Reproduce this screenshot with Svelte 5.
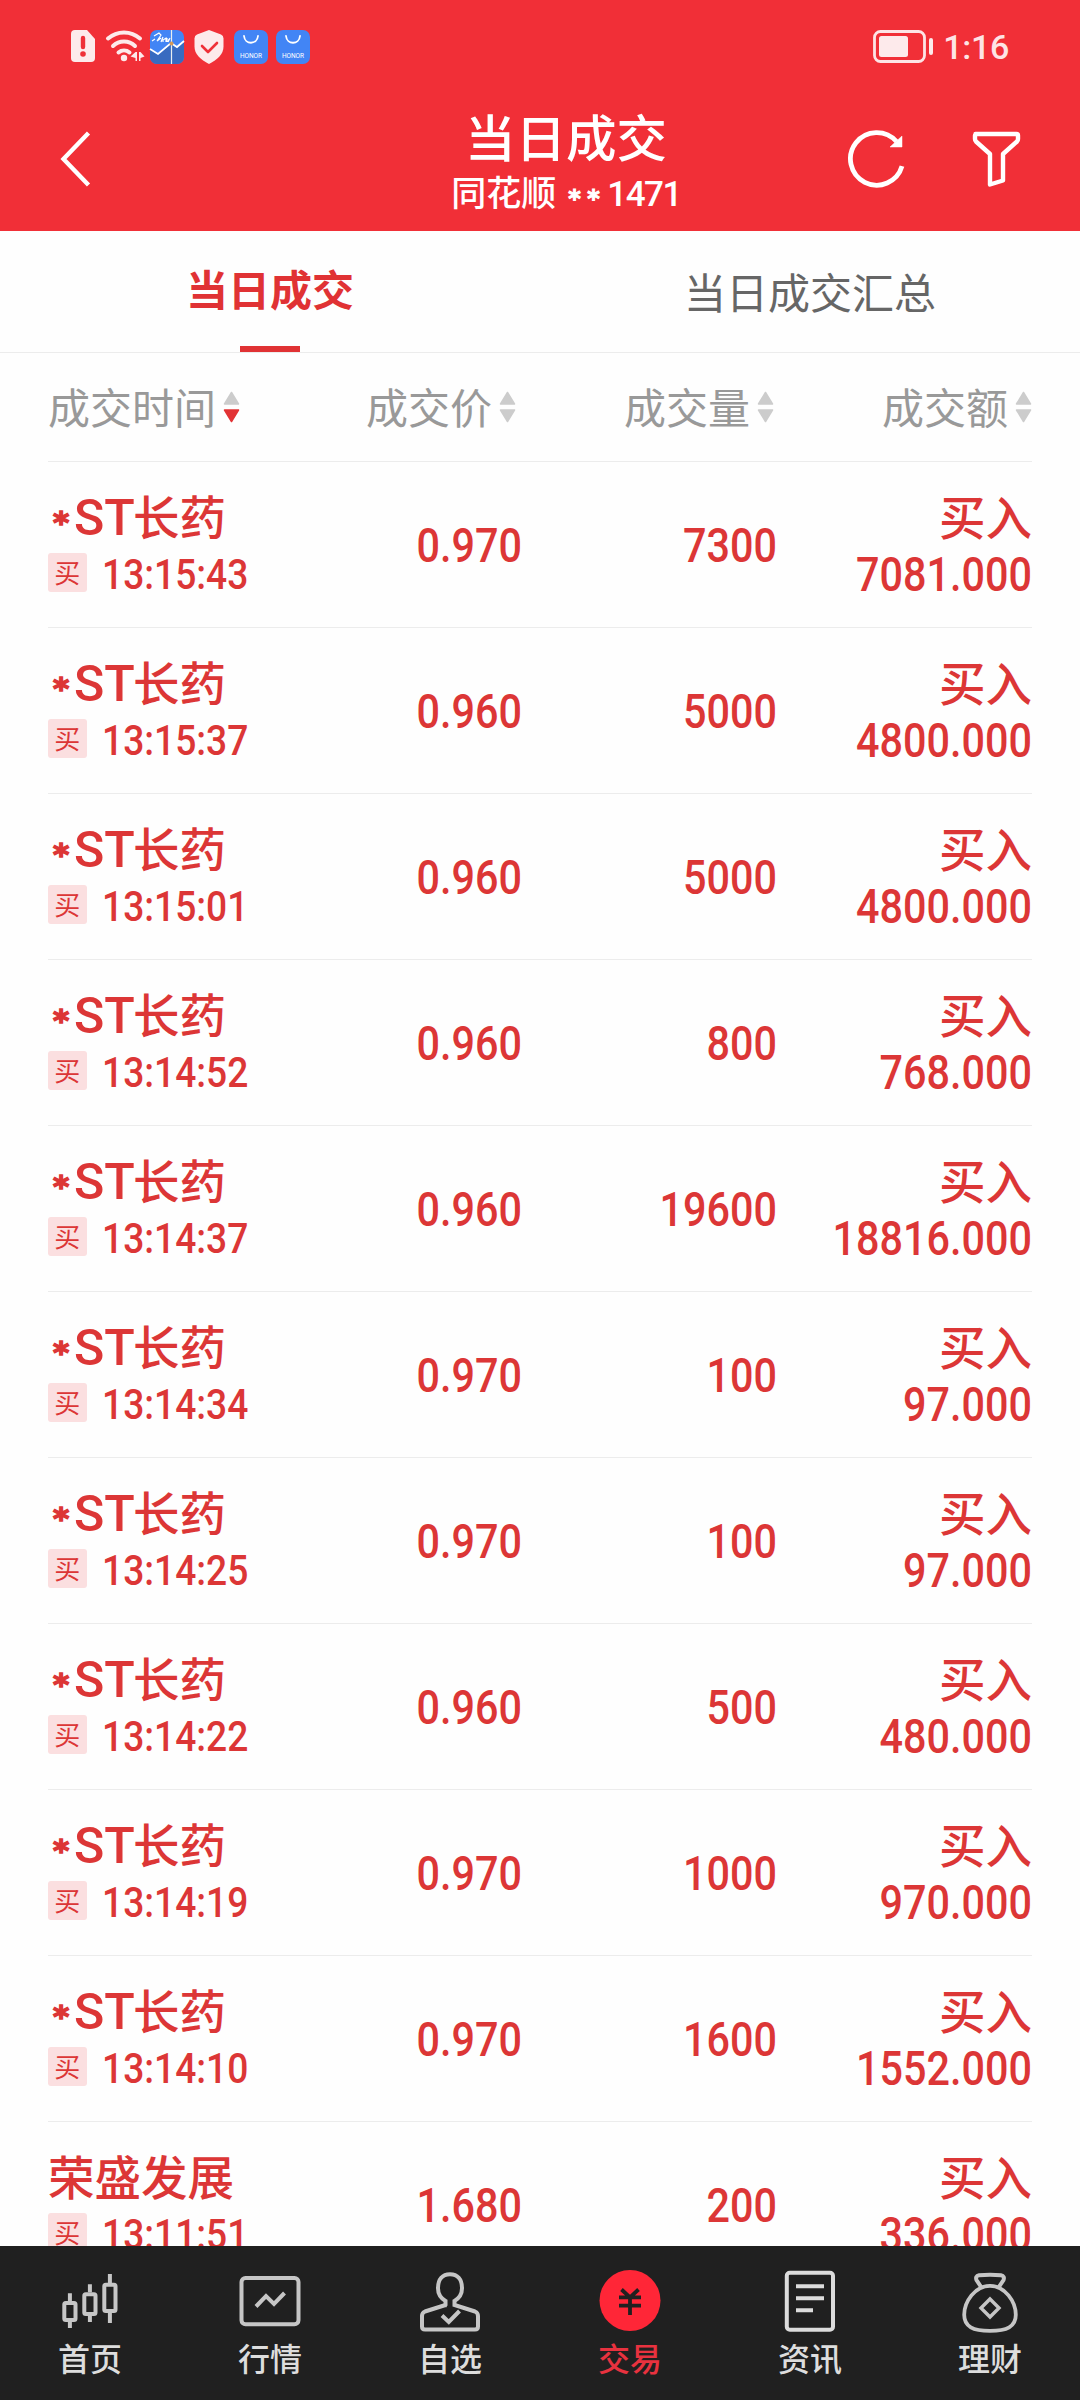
<script>
    let activeTab = "today";
    let activeNav = "交易";

    const tabs = [
        { id: "today", label: "当日成交" },
        { id: "summary", label: "当日成交汇总" },
    ];

    const columns = [
        { label: "成交时间", sorted: true },
        { label: "成交价" },
        { label: "成交量" },
        { label: "成交额" },
    ];

    const navItems = ["首页", "行情", "自选", "交易", "资讯", "理财"];

    const deals = [
        { st: true, name: "长药", time: "13:15:43", price: "0.970", count: "7300", amount: "7081.000" },
        { st: true, name: "长药", time: "13:15:37", price: "0.960", count: "5000", amount: "4800.000" },
        { st: true, name: "长药", time: "13:15:01", price: "0.960", count: "5000", amount: "4800.000" },
        { st: true, name: "长药", time: "13:14:52", price: "0.960", count: "800", amount: "768.000" },
        { st: true, name: "长药", time: "13:14:37", price: "0.960", count: "19600", amount: "18816.000" },
        { st: true, name: "长药", time: "13:14:34", price: "0.970", count: "100", amount: "97.000" },
        { st: true, name: "长药", time: "13:14:25", price: "0.970", count: "100", amount: "97.000" },
        { st: true, name: "长药", time: "13:14:22", price: "0.960", count: "500", amount: "480.000" },
        { st: true, name: "长药", time: "13:14:19", price: "0.970", count: "1000", amount: "970.000" },
        { st: true, name: "长药", time: "13:14:10", price: "0.970", count: "1600", amount: "1552.000" },
        { st: false, name: "荣盛发展", time: "13:11:51", price: "1.680", count: "200", amount: "336.000" },
    ];
</script>

<div class="screen">
    <header>
        <div class="statusbar">
            <svg class="status-icons" width="250" height="40" viewBox="0 0 250 40">
                <!-- sim alert -->
                <path d="M5 4h12l8 9v19a4 4 0 0 1-4 4H5a4 4 0 0 1-4-4V8a4 4 0 0 1 4-4z" fill="#fdeaeb" />
                <path d="M13 12v9" stroke="#ef3038" stroke-width="4.4" stroke-linecap="round" />
                <circle cx="13" cy="28" r="2.8" fill="#ef3038" />
                <!-- wifi -->
                <g fill="none" stroke="#fdeaeb" stroke-width="4" stroke-linecap="round">
                    <path d="M38 12.500a24 24 0 0 1 32 0" />
                    <path d="M43 20a16 16 0 0 1 22 0" />
                    <path d="M48.500 26.500a8.500 8.500 0 0 1 11 0" />
                </g>
                <circle cx="54" cy="32" r="3.200" fill="#fdeaeb" />
                <path d="M67 26v9h-1.500v-3l-5-1.500 5-4.500zM69 26v9h1.500v-3l4-1.500-4-4.500z" fill="#fdeaeb" />
                <!-- stock widget -->
                <rect x="80" y="4" width="34" height="34" rx="7" fill="#4285f5" />
                <path d="M80 23l8 6 13-11 6 4 7-6v15a7 7 0 0 1-7 7H87a7 7 0 0 1-7-7z" fill="#386bc0" />
                <path d="M80 23l8 5 13-11 6 4 7-6" fill="none" stroke="#fff" stroke-width="1.800" />
                <path d="M101.500 4v34" stroke="#e9eef0" stroke-width="1.200" />
                <circle cx="101.500" cy="17.500" r="2" fill="#d29a5c" />
                <path d="M82 15l3-2m-1-3l5-3 2 2-4 6 4-3m0 4l2-5m0 5v-2l3-2v4m1 0v-4m2 1l-1 3 2-4" fill="none" stroke="#fff" stroke-width="1.200" />
                <!-- shield -->
                <path d="M139 4l12 4.500q2.500 1 2.500 4v8c0 8-6 13-14.500 17.500-8.500-4.500-14.500-9.500-14.500-17.500v-8q0-3 2.500-4z" fill="#fdeaeb" />
                <path d="M132 20l6 6 9-9" fill="none" stroke="#ef3038" stroke-width="2.600" stroke-linecap="round" stroke-linejoin="round" />
                <!-- app market, twice -->
                {#each [164, 206] as x}
                    <rect {x} y="4" width="34" height="34" rx="7" fill="#4285f5" />
                    <path d="M{x + 10} 10c1 9 13 9 14 0" fill="none" stroke="#fff" stroke-width="1.800" stroke-linecap="round" />
                    <text x={x + 17} y="32" class="honor">HONOR</text>
                {/each}
            </svg>
            <div class="clock">
                <svg width="62" height="34" viewBox="0 0 62 34">
                    <rect x="1.500" y="1.500" width="50" height="30" rx="6" fill="none" stroke="#fde4e5" stroke-width="2.800" />
                    <rect x="6" y="6" width="29" height="21" rx="2.500" fill="#fdeaeb" />
                    <rect x="56" y="8" width="4" height="17" rx="2" fill="#fdeaeb" />
                </svg>
                <span>1:16</span>
            </div>
        </div>
        <div class="titlebar">
            <svg class="back" width="34" height="60" viewBox="0 0 34 60">
                <path d="M30.500 4l-25 26 25 26" fill="none" stroke="#fff" stroke-width="4.400" />
            </svg>
            <div class="title">
                <h1>当日成交</h1>
                <p>同花顺<span class="stars">**</span><span class="account">1471</span></p>
            </div>
            <div class="actions">
                <svg width="62" height="62" viewBox="0 0 62 62">
                    <path d="M50.500 13.500A26.300 26.300 0 1 0 56 38.200" fill="none" stroke="#fff" stroke-width="4.800" />
                    <path d="M56 8v11H44z" fill="#fff" stroke="#fff" stroke-width="0.500" />
                </svg>
                <svg width="62" height="62" viewBox="0 0 62 62">
                    <path d="M9.500 6h41a1.500 1.500 0 0 1 1.500 1.500v3.500q0 1.500-1 2.500l-14 12.500v26.500l-13 4v-30.500l-14-12.500q-1-1-1-2.500v-3.500a1.500 1.500 0 0 1 1.500-1.500z" fill="none" stroke="#fff" stroke-width="4.400" stroke-linejoin="round" />
                </svg>
            </div>
        </div>
    </header>

    <div class="tabs">
        {#each tabs as tab}
            <button class:active={activeTab === tab.id} on:click={() => (activeTab = tab.id)}>{tab.label}</button>
        {/each}
    </div>

    <main>
        <div class="row columnheader">
            {#each columns as column}
                <div class="cell">
                    <span>{column.label}</span>
                    <svg width="17" height="32" viewBox="0 0 17 32">
                        <path d="M8.500 1.500l7 11.500h-14z" fill="#ccc" stroke="#ccc" stroke-linejoin="round" stroke-width="1.500" />
                        <path
                            d="M8.500 30.500l7-11.500h-14z"
                            fill={column.sorted ? "#e23335" : "#ccc"}
                            stroke={column.sorted ? "#e23335" : "#ccc"}
                            stroke-linejoin="round"
                            stroke-width="1.500"
                        />
                    </svg>
                </div>
            {/each}
        </div>
        {#each deals as deal}
            <div class="row deal">
                <div class="stock">
                    <div class="name">
                        {#if deal.st}<span class="star">*</span><span class="st">ST</span>{/if}{deal.name}
                    </div>
                    <div class="when">
                        <span class="badge">买</span>
                        <span class="time">{deal.time}</span>
                    </div>
                </div>
                <div class="number">{deal.price}</div>
                <div class="number">{deal.count}</div>
                <div class="total">
                    <div class="name">买入</div>
                    <div class="number">{deal.amount}</div>
                </div>
            </div>
        {/each}
    </main>

    <nav>
        {#each navItems as item, i}
            <button class:active={activeNav === item} on:click={() => (activeNav = item)}>
                <svg width="80" height="66" viewBox="0 0 80 66" fill="none" stroke="#c6c6c6" stroke-width="4">
                    {#if i === 0}
                        <rect x="14.300" y="33" width="11.200" height="17" rx="1.500" />
                        <rect x="34.300" y="24.300" width="11.200" height="19.700" rx="1.500" />
                        <rect x="54.300" y="14.700" width="11.200" height="26.300" rx="1.500" />
                        <path d="M19.900 23.300v8M19.900 52v6M39.900 14.300v8M39.900 46v6M59.900 4v9M59.900 43v10" />
                    {:else if i === 1}
                        <rect x="11.500" y="8" width="57" height="46.300" rx="4" />
                        <path d="M26 36.500l10-10.500 8 8 10.500-11" />
                    {:else if i === 2}
                        <path d="M34.500 36.500l1-1.500v-4q-7.500-4.500-7.500-12.700c0-9 4.500-14 12-14s12 5 12 14q0 8.200-7.500 12.700v4l20.500 6.500q3 1.200 3 4.500v10.500q0 3-3 3h-50q-3 0-3-3v-10.500q0-3.300 3-4.500l20.500-6.500" />
                        <path d="M32 45.500l6.800 6.500 10.700-11" />
                    {:else if i === 3}
                        <circle cx="40" cy="30.500" r="30.500" fill="#ff2637" stroke="none" />
                        <path d="M31.500 19.500l8.500 8 8.500-8M29 27.300h22M29 35.700h22M40 26v19" stroke="#202020" stroke-width="3.800" />
                    {:else if i === 4}
                        <g stroke="#dcdcdc">
                            <rect x="16.800" y="2.700" width="46.200" height="57" rx="3" />
                            <path d="M26 16.300h28M26 28.300h28M26 40.300h17" />
                        </g>
                    {:else}
                        <path d="M31.500 17.500l-5-7.500q-1.500-4 2.500-4.700 11-1.300 22 0 4 .7 2.500 4.700l-5 7.500" />
                        <path d="M40 15.800c-15 0-25.800 16-25.800 29 0 12 9 16 25.800 16s25.800-4 25.800-16c0-13-10.800-29-25.800-29z" stroke-width="3.800" />
                        <path d="M40 29l9 9-9 9-9-9z" stroke-width="3.400" />
                    {/if}
                </svg>
                <span>{item}</span>
            </button>
        {/each}
    </nav>
</div>

<style>
    :global(body) {
        margin: 0;
        background: #fefefe;
    }
    .screen {
        display: flex;
        flex-direction: column;
        width: 1080px;
        height: 2400px;
        overflow: hidden;
        background: #fefefe;
        font-family: "Noto Sans CJK SC", sans-serif;
    }
    button {
        border: none;
        padding: 0;
        background: none;
        font-family: inherit;
        cursor: pointer;
    }
    svg {
        display: block;
        flex: none;
    }
    header {
        flex: none;
        height: 231px;
        background: #f12f37;
        color: #fff;
    }
    .statusbar {
        display: flex;
        justify-content: space-between;
        height: 87px;
        padding: 26px 71px 0 70px;
        box-sizing: border-box;
    }
    .honor {
        font: 6.500px "Roboto", sans-serif;
        fill: #fff;
        text-anchor: middle;
    }
    .clock {
        display: flex;
        gap: 8px;
        padding-top: 4px;
        font: 500 34px/34px "Roboto", sans-serif;
        letter-spacing: -0.300px;
        color: #fde4e5;
    }
    .titlebar {
        display: grid;
        grid-template-columns: 240px 1fr 234px;
        align-items: center;
        height: 144px;
    }
    .back {
        margin-left: 58px;
    }
    .title {
        padding: 8px 0 0 46px;
        text-align: center;
    }
    .title h1 {
        margin: 0 0 2px;
        font-size: 50.500px;
        line-height: 58px;
        font-weight: 500;
    }
    .title p {
        margin: 0;
        font-size: 35px;
        line-height: 50px;
        font-weight: 500;
    }
    /* low six-armed asterisks */
    .stars,
    .star {
        display: inline-block;
        font-family: "DejaVu Sans", sans-serif;
        font-weight: 700;
        line-height: 1;
    }
    .stars {
        margin: 0 1px 0 12px;
        font-size: 24px;
        letter-spacing: 6.500px;
        vertical-align: -1px;
        -webkit-text-stroke: 1px currentColor;
    }
    .star {
        width: 26px;
        font-size: 31px;
        text-align: center;
        vertical-align: 2px;
        -webkit-text-stroke: 1.500px currentColor;
    }
    .account {
        font-family: "Roboto", sans-serif;
        letter-spacing: -1.500px;
    }
    .actions {
        display: flex;
        gap: 58px;
        padding-bottom: 1px;
    }
    .tabs {
        flex: none;
        display: grid;
        grid-template-columns: 1fr 1fr;
        height: 122px;
        box-sizing: border-box;
        border-bottom: 1px solid #ececec;
    }
    .tabs button {
        position: relative;
        padding-bottom: 3px;
        font-size: 42px;
        color: #666;
    }
    .tabs .active {
        padding-bottom: 9px;
        font-weight: 700;
        color: #e03234;
    }
    .tabs .active::after {
        content: "";
        position: absolute;
        left: 50%;
        bottom: 0;
        width: 60px;
        height: 6px;
        margin-left: -30px;
        background: #e03234;
    }
    main {
        flex: 1;
        min-height: 0;
        overflow: hidden;
        padding: 0 48px;
    }
    .row {
        display: grid;
        grid-template-columns: 219px 255px 255px 255px;
        box-sizing: border-box;
        align-items: center;
        height: 166px;
        border-bottom: 1px solid #ececec;
    }
    .columnheader {
        grid-template-columns: 219px 249px 258px 258px;
        height: 109px;
        font-size: 42px;
        color: #999;
    }
    .cell {
        display: flex;
        align-items: center;
        justify-content: flex-end;
        gap: 7px;
        white-space: nowrap;
    }
    .cell span {
        padding-bottom: 4px;
    }
    .cell:first-child {
        justify-content: flex-start;
    }
    .deal {
        color: #dc3636;
    }
    .stock {
        padding-bottom: 7px;
    }
    .name {
        height: 62px;
        font-size: 46.500px;
        line-height: 60px;
        font-weight: 500;
        white-space: nowrap;
    }
    .st {
        display: inline-block;
        width: 59px;
        font-family: "Roboto", sans-serif;
        font-size: 50px;
        line-height: 1;
    }
    .when {
        display: flex;
        align-items: center;
        gap: 15px;
        height: 50px;
    }
    .badge {
        width: 39px;
        height: 39px;
        border-radius: 3px;
        background: #fbdfe0;
        font-size: 26px;
        line-height: 37px;
        text-align: center;
    }
    /* the figures are set a little narrower than the face is drawn */
    .time,
    .number {
        font-family: "Roboto", sans-serif;
        font-weight: 500;
    }
    .time {
        padding-top: 4px;
        font-size: 42px;
        transform: scaleX(0.885);
        transform-origin: left;
    }
    .number {
        padding-top: 3px;
        font-size: 47.500px;
        line-height: 50px;
        text-align: right;
        transform: scaleX(0.87);
        transform-origin: right;
    }
    .total {
        text-align: right;
    }
    .total .name {
        height: 58px;
        line-height: 51px;
    }
    nav {
        flex: none;
        display: grid;
        grid-template-columns: repeat(6, 1fr);
        height: 154px;
        background: #202020;
    }
    nav button {
        display: flex;
        flex-direction: column;
        align-items: center;
        padding-top: 24px;
        font-size: 32px;
        line-height: 42px;
        font-weight: 500;
        color: #ddd;
    }
    nav .active {
        color: #e8323f;
    }
</style>
